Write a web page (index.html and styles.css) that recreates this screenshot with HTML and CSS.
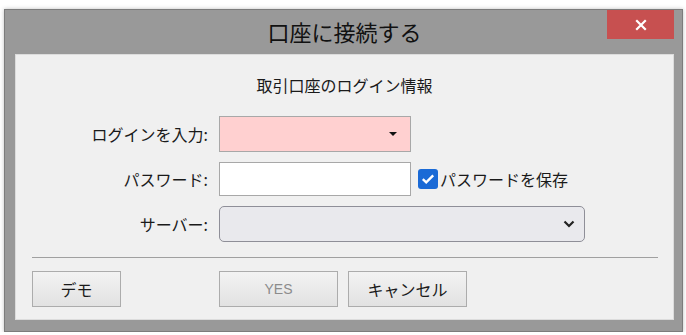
FILE: index.html
```
<!DOCTYPE html>
<html lang="ja">
<head>
    <meta charset="UTF-8">
    <title>口座に接続する</title>
    <link rel="stylesheet" href="styles.css">
</head>
<body>
    <div class="window">
        <div class="titlebar">
            <span class="title">口座に接続する</span>
            <button class="close-btn">
                <svg width="12" height="12" viewBox="0 0 12 12"><path d="M2 2 L10 10 M10 2 L2 10" stroke="#fff" stroke-width="2.2" stroke-linecap="square"/></svg>
            </button>
        </div>

        <div class="panel">
            <p class="subtitle">取引口座のログイン情報</p>

            <div class="form-grid">
                <label class="label">ログインを入力:</label>
                <div class="input login-input">
                    <span class="tri"></span>
                </div>
                <span></span>

                <label class="label">パスワード:</label>
                <div class="input pass-input"></div>
                <label class="remember">
                    <span class="checkbox">
                        <svg width="14" height="12" viewBox="0 0 14 12"><path d="M1.8 6.2 L5.2 9.4 L12.2 2.4" fill="none" stroke="#fff" stroke-width="2.4"/></svg>
                    </span>
                    パスワードを保存
                </label>

                <label class="label">サーバー:</label>
                <div class="select">
                    <svg width="12" height="8" viewBox="0 0 12 8"><path d="M1.5 1.5 L6 6 L10.5 1.5" fill="none" stroke="#222" stroke-width="2.2"/></svg>
                </div>
            </div>

            <hr class="sep">

            <div class="footer">
                <button class="btn demo-btn">デモ</button>
                <button class="btn yes-btn" disabled>YES</button>
                <button class="btn">キャンセル</button>
            </div>
        </div>
    </div>
</body>
</html>
```

FILE: styles.css
```
* {
    margin: 0;
    padding: 0;
    box-sizing: border-box;
}

body {
    background: #fff;
    font-family: "Noto Sans CJK JP", "Noto Sans", sans-serif;
    color: #1a1a1a;
}

.window {
    position: relative;
    width: 679px;
    height: 323px;
    margin: 9px 0 0 4px;
    background: #999;
    border: 1px solid #7c7c7c;
    box-shadow: 0 0 4px rgba(0,0,0,0.25);
    padding: 0 8px 11px 10px;
    display: flex;
    flex-direction: column;
}

.titlebar {
    height: 44px;
    display: flex;
    justify-content: center;
    align-items: center;
}

.title {
    font-size: 22px;
    color: #111;
    margin-top: -2px;
}

.close-btn {
    position: absolute;
    top: 0;
    right: 8px;
    width: 67px;
    height: 29px;
    background: #c75050;
    border: none;
    display: flex;
    align-items: center;
    justify-content: center;
}

.panel {
    flex: 1;
    background: #f0f0f0;
    border: 1px solid #dcdcdc;
    padding-top: 19px;
    display: flex;
    flex-direction: column;
}

.subtitle {
    text-align: center;
    font-size: 16px;
    line-height: 22px;
}

.form-grid {
    display: grid;
    grid-template-columns: 192px 192px auto;
    column-gap: 11px;
    row-gap: 10px;
    margin-top: 20px;
    align-items: center;
}

.label {
    text-align: right;
    font-size: 16px;
}

.input {
    height: 36px;
    border: 1px solid #a8a8a8;
    background: #fff;
}

.login-input {
    background: #ffd0d0;
    position: relative;
}

.tri {
    position: absolute;
    right: 13px;
    top: 15px;
    border-left: 4px solid transparent;
    border-right: 4px solid transparent;
    border-top: 4px solid #111;
}

.pass-input {
    height: 34px;
}

.remember {
    display: flex;
    align-items: center;
    gap: 2px;
    font-size: 16px;
    margin-left: -4px;
}

.checkbox {
    width: 20px;
    height: 20px;
    background: #1a6ad6;
    border-radius: 3px;
    display: flex;
    align-items: center;
    justify-content: center;
}

.select {
    grid-column: 2 / 4;
    width: 366px;
    height: 36px;
    background: #e9e9ed;
    border: 1px solid #8f8f98;
    border-radius: 5px;
    display: flex;
    align-items: center;
    justify-content: flex-end;
    padding-right: 9px;
}

.sep {
    border: none;
    border-top: 1px solid #a0a0a0;
    margin: 15px 15px 0 16px;
}

.footer {
    display: flex;
    margin-top: 13px;
    padding-left: 16px;
    gap: 10px;
}

.btn {
    height: 36px;
    width: 119px;
    border: 1px solid #acacac;
    background: linear-gradient(#f3f3f3, #e2e2e2);
    font-family: "Noto Sans CJK JP", sans-serif;
    font-size: 16px;
    color: #1a1a1a;
}

.demo-btn {
    width: 89px;
    margin-right: 88px;
}

.yes-btn {
    font-family: "Liberation Sans", sans-serif;
    font-size: 14px;
    color: #8c8c8c;
}
```
